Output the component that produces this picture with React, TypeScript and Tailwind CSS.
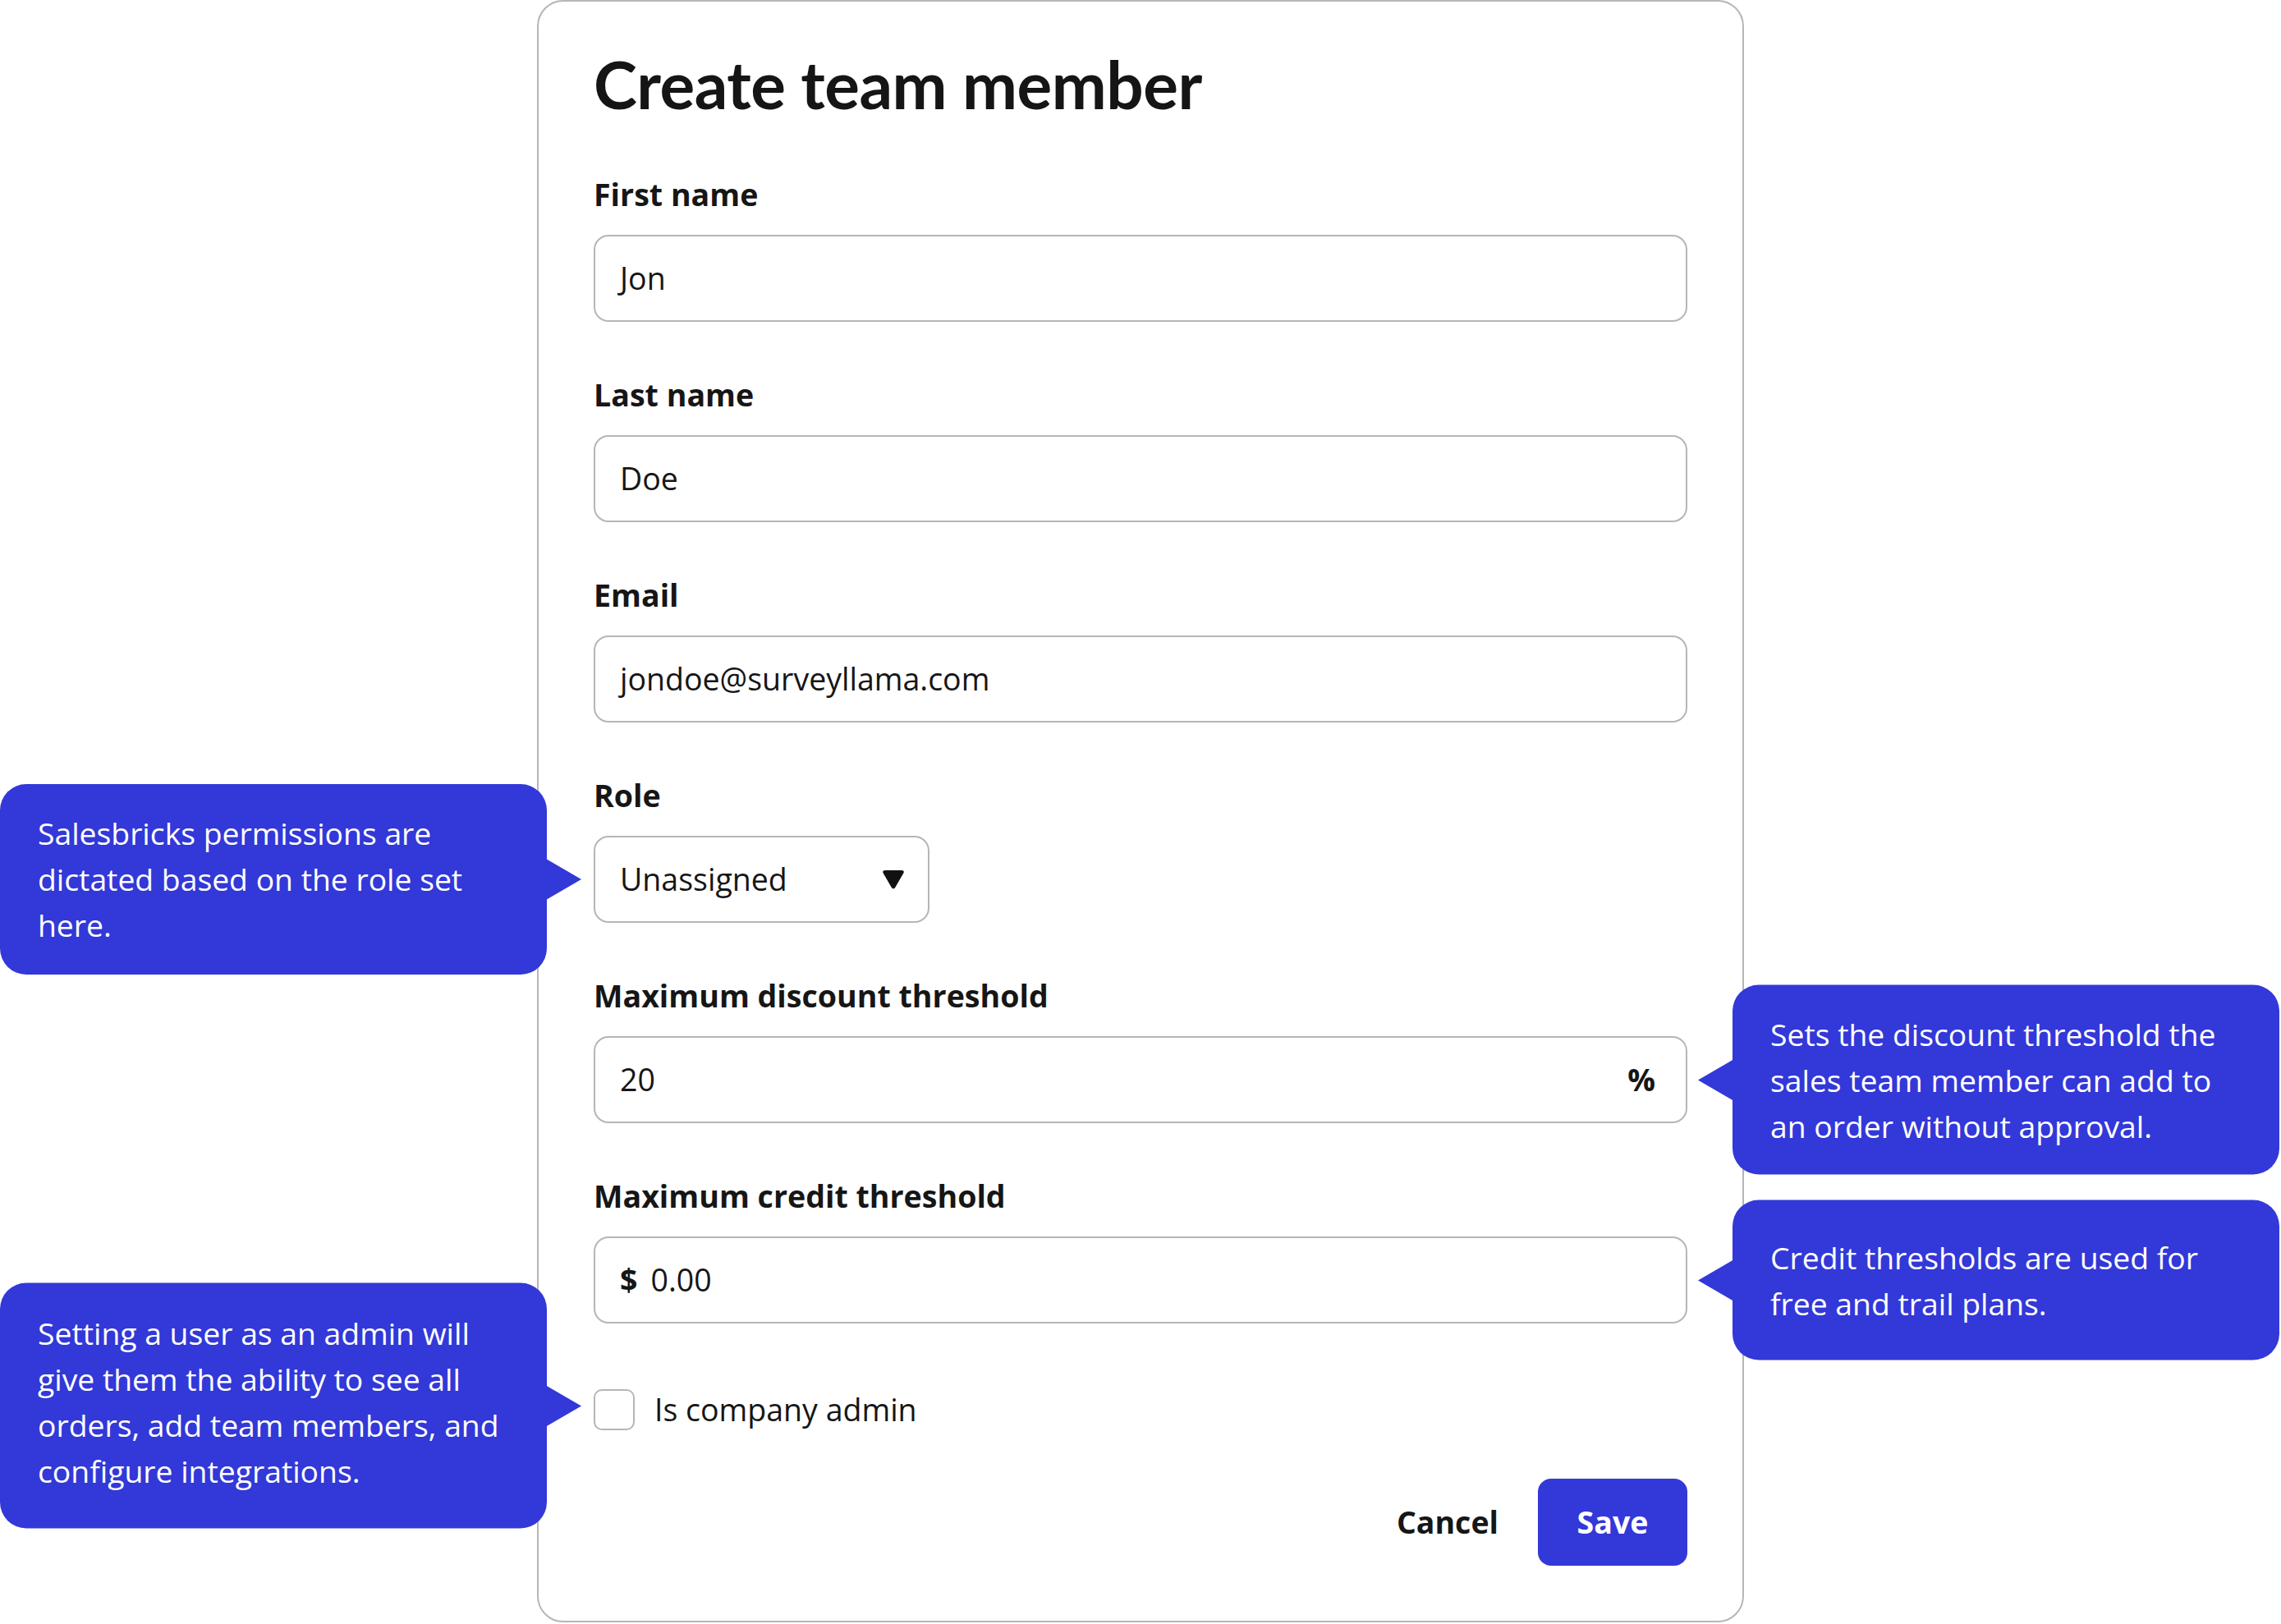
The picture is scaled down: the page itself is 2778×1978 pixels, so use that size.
import React from 'react'

const FIELDS = [
  { label: 'First name', value: 'Jon' },
  { label: 'Last name', value: 'Doe' },
  { label: 'Email', value: 'jondoe@surveyllama.com' },
]

function Note({
  side,
  className,
  children,
}: {
  side: 'left' | 'right'
  className: string
  children: React.ReactNode
}) {
  return (
    <div
      className={`absolute top-1/2 -translate-y-1/2 z-10 w-[666px] rounded-[32px] bg-[#3338d8] pl-[46px] pr-[20px] flex items-center text-white text-[37.3px] leading-[56px] whitespace-nowrap ${
        side === 'left' ? 'right-[calc(100%+57px)]' : 'left-[calc(100%+55px)]'
      } ${className}`}
    >
      <p>{children}</p>
      {side === 'left' ? (
        <svg
          width="43"
          height="50"
          viewBox="0 0 43 50"
          className="absolute top-1/2 -translate-y-1/2 left-[calc(100%-1px)]"
        >
          <polygon points="0,0 43,25 0,50" fill="#3338d8" />
        </svg>
      ) : (
        <svg
          width="43"
          height="50"
          viewBox="0 0 43 50"
          className="absolute top-1/2 -translate-y-1/2 right-[calc(100%-1px)]"
        >
          <polygon points="43,0 0,25 43,50" fill="#3338d8" />
        </svg>
      )}
    </div>
  )
}

function Label({ children }: { children: React.ReactNode }) {
  return (
    <p className="h-[52px] leading-[52px] text-[37.6px] font-bold text-[#161616]">{children}</p>
  )
}

export default function App() {
  return (
    <div
      className="w-full h-[1978px] bg-white overflow-hidden"
      style={{ fontFamily: '"Open Sans", "Noto Sans", sans-serif' }}
    >
      <div className="ml-[654px] w-[1470px] h-[1976px] border-2 border-[#b6b6b6] rounded-[32px] pl-[67px] pr-[67px] pt-[60px]">
        {/* Title */}
        <h1
          className="h-[80px] leading-[80px] text-[80px] font-bold text-[#151515] tracking-[-0.5px]"
          style={{ fontFamily: 'Lato, "Open Sans", sans-serif' }}
        >
          Create team member
        </h1>

        <div className="mt-[69px] flex flex-col gap-[63px]">
          {FIELDS.map((f) => (
            <div key={f.label}>
              <Label>{f.label}</Label>
              <div className="mt-[23px] h-[106px] border-2 border-[#b6b6b6] rounded-[18px] px-[30px] flex items-center text-[37.5px] text-[#161616]">
                {f.value}
              </div>
            </div>
          ))}

          {/* Role */}
          <div>
            <Label>Role</Label>
            <div className="relative mt-[23px]">
              <div className="w-[409px] h-[106px] border-2 border-[#b6b6b6] rounded-[18px] pl-[30px] pr-[28px] flex items-center justify-between text-[37.5px] text-[#161616]">
                <span>Unassigned</span>
                <svg width="28" height="26" viewBox="0 0 28 26">
                  <path
                    d="M4 2 H24 Q28 2 26.3 5.5 L16.5 22.5 Q14 26.5 11.5 22.5 L1.7 5.5 Q0 2 4 2 Z"
                    fill="#111"
                  />
                </svg>
              </div>
              <Note side="left" className="h-[232px]">
                Salesbricks permissions are
                <br />
                dictated based on the role set
                <br />
                here.
              </Note>
            </div>
          </div>

          {/* Discount */}
          <div>
            <Label>Maximum discount threshold</Label>
            <div className="relative mt-[23px]">
              <div className="h-[106px] border-2 border-[#b6b6b6] rounded-[18px] pl-[30px] pr-[37px] flex items-center justify-between text-[37.5px] text-[#161616]">
                <span>20</span>
                <span className="font-bold">%</span>
              </div>
              <Note side="right" className="h-[231px]">
                Sets the discount threshold the
                <br />
                sales team member can add to
                <br />
                an order without approval.
              </Note>
            </div>
          </div>

          {/* Credit */}
          <div>
            <Label>Maximum credit threshold</Label>
            <div className="relative mt-[23px]">
              <div className="h-[106px] border-2 border-[#b6b6b6] rounded-[18px] px-[30px] flex items-center gap-[16px] text-[37.5px] text-[#161616]">
                <span className="font-bold">$</span>
                <span>0.00</span>
              </div>
              <Note side="right" className="h-[195px]">
                Credit thresholds are used for
                <br />
                free and trail plans.
              </Note>
            </div>
          </div>
        </div>

        {/* Admin checkbox */}
        <div className="relative mt-[77px] flex items-center gap-[24px]">
          <div className="w-[50px] h-[50px] border-2 border-[#b6b6b6] rounded-[10px] bg-white" />
          <span className="text-[37.5px] text-[#161616]">Is company admin</span>
          <Note side="left" className="h-[299px] -mt-[5px] pb-[10px]">
            Setting a user as an admin will
            <br />
            give them the ability to see all
            <br />
            orders, add team members, and
            <br />
            configure integrations.
          </Note>
        </div>

        {/* Actions */}
        <div className="mt-[56px] flex items-center justify-end gap-[48px]">
          <button className="text-[37.5px] font-bold text-[#161616]">Cancel</button>
          <button className="w-[182px] h-[106px] rounded-[16px] bg-[#3338d8] text-white text-[37.5px] font-bold">
            Save
          </button>
        </div>
      </div>
    </div>
  )
}
